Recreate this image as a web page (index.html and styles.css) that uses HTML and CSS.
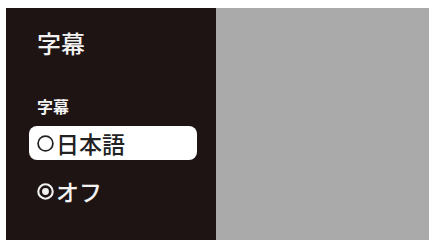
FILE: index.html
```html
<!DOCTYPE html>
<html lang="ja">
<head>
<meta charset="utf-8">
<link rel="stylesheet" href="styles.css">
</head>
<body>
<div class="frame">
  <div class="menu">
    <div class="title">字幕</div>
    <div class="section">字幕</div>
    <div class="option selected">
      <svg class="radio" viewBox="0 0 20 20"><circle cx="10" cy="10" r="7.8" fill="none" stroke="currentColor" stroke-width="1.8"/></svg>
      <span>日本語</span>
    </div>
    <div class="option">
      <svg class="radio" viewBox="0 0 20 20"><circle cx="10" cy="10" r="7.6" fill="none" stroke="currentColor" stroke-width="2.2"/><circle cx="10" cy="10" r="3.6" fill="currentColor"/></svg>
      <span>オフ</span>
    </div>
  </div>
  <div class="preview"></div>
</div>
</body>
</html>
```
FILE: styles.css
```css
html, body {
  margin: 0;
  padding: 0;
  background: #ffffff;
}
body {
  width: 432px;
  height: 248px;
  font-family: "Noto Sans CJK JP", "Noto Sans", sans-serif;
}
.frame {
  display: flex;
  margin: 8px 0 0 6px;
  width: 423px;
  height: 232px;
}
.menu {
  width: 210px;
  background: #1e1413;
  color: #f2f2f2;
  padding: 20px 0 0 31px;
  box-sizing: border-box;
  display: flex;
  flex-direction: column;
}
.preview {
  flex: 1;
  background: #aaaaaa;
}
.title {
  font-size: 24px;
  line-height: 30px;
  font-weight: 500;
}
.section {
  margin-top: 37px;
  font-size: 16px;
  line-height: 22px;
  font-weight: 700;
}
.option {
  display: flex;
  align-items: center;
  gap: 1px;
  font-size: 23px;
  line-height: 28px;
  font-weight: 500;
  margin-left: -8px;
  padding: 3px 7px;
  width: 168px;
  box-sizing: border-box;
  border-radius: 8px;
  margin-top: 14px;
}
.option.selected {
  background: #ffffff;
  color: #222222;
  margin-top: 9px;
}
.radio {
  width: 19px;
  height: 19px;
  flex: none;
}
```
